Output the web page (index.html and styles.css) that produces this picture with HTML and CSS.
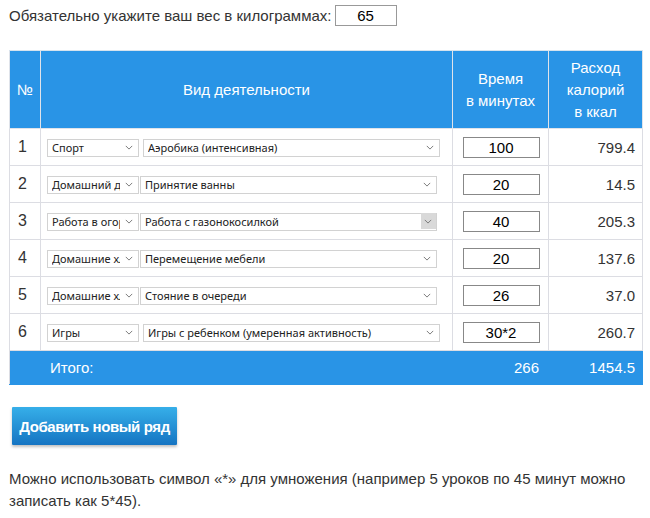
FILE: index.html
```html
<!DOCTYPE html>
<html lang="ru">
<head>
  <meta charset="UTF-8">
  <title>Калькулятор расхода калорий</title>
  <link rel="stylesheet" href="styles.css">
</head>
<body>
  <div class="page">

    <!-- Вес -->
    <div class="weight-row">
      <label for="weight">Обязательно укажите ваш вес в килограммах:</label>
      <input type="text" id="weight" class="weight-input" value="65">
    </div>

    <!-- Таблица активностей -->
    <table class="calc">
      <thead>
        <tr>
          <th class="col-num">№</th>
          <th class="col-act">Вид деятельности</th>
          <th class="col-time">Время<br>в минутах</th>
          <th class="col-kcal">Расход<br>калорий<br>в ккал</th>
        </tr>
      </thead>
      <tbody>
        <tr>
          <td class="num">1</td>
          <td>
            <div class="pick wide-gap">
              <span class="sel sel-cat"><select><option>Спорт</option></select><svg class="arrow" viewBox="0 0 10 6"><path d="M1 1l4 4 4-4"/></svg></span>
              <span class="sel sel-act"><select><option>Аэробика (интенсивная)</option></select><svg class="arrow" viewBox="0 0 10 6"><path d="M1 1l4 4 4-4"/></svg></span>
            </div>
          </td>
          <td class="time"><input type="text" value="100"></td>
          <td class="kcal">799.4</td>
        </tr>
        <tr>
          <td class="num">2</td>
          <td>
            <div class="pick">
              <span class="sel sel-cat"><select><option>Домашний досуг</option></select><svg class="arrow" viewBox="0 0 10 6"><path d="M1 1l4 4 4-4"/></svg></span>
              <span class="sel sel-act"><select><option>Принятие ванны</option></select><svg class="arrow" viewBox="0 0 10 6"><path d="M1 1l4 4 4-4"/></svg></span>
            </div>
          </td>
          <td class="time"><input type="text" value="20"></td>
          <td class="kcal">14.5</td>
        </tr>
        <tr>
          <td class="num">3</td>
          <td>
            <div class="pick">
              <span class="sel sel-cat"><select><option>Работа в огороде</option></select><svg class="arrow" viewBox="0 0 10 6"><path d="M1 1l4 4 4-4"/></svg></span>
              <span class="sel sel-act hover"><select><option>Работа с газонокосилкой</option></select><svg class="arrow" viewBox="0 0 10 6"><path d="M1 1l4 4 4-4"/></svg></span>
            </div>
          </td>
          <td class="time"><input type="text" value="40"></td>
          <td class="kcal">205.3</td>
        </tr>
        <tr>
          <td class="num">4</td>
          <td>
            <div class="pick">
              <span class="sel sel-cat"><select><option>Домашние хлопоты</option></select><svg class="arrow" viewBox="0 0 10 6"><path d="M1 1l4 4 4-4"/></svg></span>
              <span class="sel sel-act"><select><option>Перемещение мебели</option></select><svg class="arrow" viewBox="0 0 10 6"><path d="M1 1l4 4 4-4"/></svg></span>
            </div>
          </td>
          <td class="time"><input type="text" value="20"></td>
          <td class="kcal">137.6</td>
        </tr>
        <tr>
          <td class="num">5</td>
          <td>
            <div class="pick">
              <span class="sel sel-cat"><select><option>Домашние хлопоты</option></select><svg class="arrow" viewBox="0 0 10 6"><path d="M1 1l4 4 4-4"/></svg></span>
              <span class="sel sel-act"><select><option>Стояние в очереди</option></select><svg class="arrow" viewBox="0 0 10 6"><path d="M1 1l4 4 4-4"/></svg></span>
            </div>
          </td>
          <td class="time"><input type="text" value="26"></td>
          <td class="kcal">37.0</td>
        </tr>
        <tr>
          <td class="num">6</td>
          <td>
            <div class="pick wide-gap">
              <span class="sel sel-cat"><select><option>Игры</option></select><svg class="arrow" viewBox="0 0 10 6"><path d="M1 1l4 4 4-4"/></svg></span>
              <span class="sel sel-act"><select><option>Игры с ребенком (умеренная активность)</option></select><svg class="arrow" viewBox="0 0 10 6"><path d="M1 1l4 4 4-4"/></svg></span>
            </div>
          </td>
          <td class="time"><input type="text" value="30*2"></td>
          <td class="kcal">260.7</td>
        </tr>
      </tbody>
      <tfoot>
        <tr>
          <td></td>
          <td class="total-label">Итого:</td>
          <td class="total-time">266</td>
          <td class="total-kcal">1454.5</td>
        </tr>
      </tfoot>
    </table>

    <button class="add-btn">Добавить новый ряд</button>

    <p class="note">Можно использовать символ «*» для умножения (например 5 уроков по 45 минут можно записать как 5*45).</p>

  </div>
</body>
</html>
```

FILE: styles.css
```css
body {
  margin: 0;
  background: #fff;
  color: #333;
  font-family: "Liberation Sans", Arial, sans-serif;
  font-size: 15px;
}

.page {
  padding: 5px 7px 0 9px;
}

/* Вес */
.weight-row {
  display: flex;
  align-items: center;
  gap: 3px;
  height: 21px;
}

.weight-input {
  width: 62px;
  height: 21px;
  box-sizing: border-box;
  border: 1px solid #999;
  padding: 0;
  text-align: center;
  font-family: "Liberation Sans", Arial, sans-serif;
  font-size: 15px;
  color: #000;
}

/* Таблица */
.calc {
  margin-top: 24px;
  width: 634px;
  border-collapse: collapse;
}

.calc th {
  background: #2994e6;
  color: #fff;
  font-weight: normal;
  font-size: 15px;
  line-height: 22px;
  height: 77px;
  padding: 0;
  border: 1px solid #dfe3ea;
  border-top-color: #d6e3ee;
}

.calc thead th + th {
  border-left-color: #8cc4ef;
}

.col-num { width: 30px; }
.col-time { width: 95px; }
.col-kcal { width: 93px; }

.calc td {
  height: 36px;
  padding: 0;
  border: 1px solid #dcdde3;
}

.num {
  padding-left: 8px !important;
  font-size: 16px;
}

.kcal {
  text-align: right;
  padding-right: 7px !important;
}

.time {
  text-align: center;
}

.time input {
  width: 77px;
  height: 21px;
  box-sizing: border-box;
  border: 1px solid #888;
  padding: 0;
  margin-left: 1px;
  text-align: center;
  font-family: "Liberation Sans", Arial, sans-serif;
  font-size: 15px;
  color: #000;
}

/* Выпадающие списки */
.pick {
  display: flex;
  gap: 1px;
  padding-left: 6px;
}

.pick.wide-gap {
  gap: 4px;
}

.sel {
  position: relative;
  display: block;
  height: 18px;
}

.sel select {
  appearance: none;
  -webkit-appearance: none;
  width: 100%;
  height: 18px;
  box-sizing: border-box;
  border: 1px solid #d2d2d2;
  border-radius: 0;
  background: #fff;
  padding: 0 18px 0 4px;
  margin: 0;
  font-family: "Noto Sans", "DejaVu Sans", sans-serif;
  font-size: 11px;
  color: #222;
}

.sel-cat { width: 92px; }
.sel-act { width: 297px; }

.arrow {
  position: absolute;
  right: 6px;
  top: 7px;
  width: 8px;
  height: 5px;
  fill: none;
  stroke: #777;
  stroke-width: 1.2;
  pointer-events: none;
}

.sel.hover::after {
  content: "";
  position: absolute;
  right: 1px;
  top: 1px;
  width: 15px;
  height: 16px;
  background: #d9d9d9;
}

.sel.hover .arrow {
  z-index: 1;
  right: 5px;
}

/* Итого */
.calc tfoot td {
  background: #2994e6;
  color: #fff;
  height: 33px;
  border-color: #2994e6;
  border-left-color: #8cc4ef;
}

.calc tfoot td:first-child {
  border-left-color: #dcdde3;
}

.total-label {
  padding-left: 9px !important;
}

.total-time {
  text-align: right;
  padding-right: 9px !important;
}

.total-kcal {
  text-align: right;
  padding-right: 7px !important;
}

/* Кнопка */
.add-btn {
  display: block;
  margin: 22px 0 0 3px;
  width: 165px;
  height: 38px;
  padding: 0;
  border: none;
  border-radius: 1px;
  background: linear-gradient(#36afe9, #1574c2);
  box-shadow: 0 2px 3px rgba(0, 0, 0, 0.25);
  color: #fff;
  font-family: "Liberation Sans", Arial, sans-serif;
  font-size: 15px;
  font-weight: bold;
  letter-spacing: -0.4px;
  white-space: nowrap;
  cursor: pointer;
}

.note {
  margin: 23px 0 0;
  line-height: 22px;
}
```
